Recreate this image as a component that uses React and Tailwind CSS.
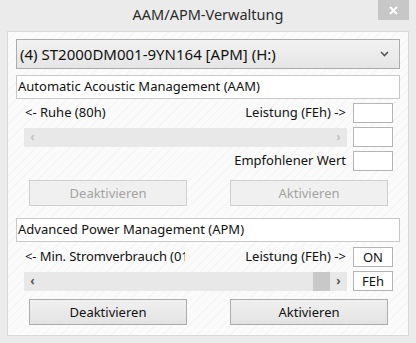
import React from 'react';

const font = { fontFamily: '"Noto Sans", "Open Sans", sans-serif' };

function EditBox({ value, w = 'w-[40px]' }) {
  return (
    <div className={`${w} h-[20px] border border-[#b4b4b4] bg-white flex items-center justify-center text-[13px] text-[#111] leading-none`}>
      {value}
    </div>
  );
}

function ScrollBar({ enabled, thumb }) {
  const arrow = enabled ? 'text-[#555]' : 'text-[#c4c4c4]';
  return (
    <div className="w-[323px] h-[19px] bg-[#e8e8e8] flex items-center">
      <span className={`w-[17px] text-center text-[12px] font-bold leading-none ${arrow}`}>‹</span>
      <div className="flex-1 flex justify-end h-full">
        {thumb && <div className="w-[17px] h-full bg-[#c8c8c8]" />}
      </div>
      <span className={`w-[17px] text-center text-[12px] font-bold leading-none ${arrow}`}>›</span>
    </div>
  );
}

function Btn({ label, disabled }) {
  return (
    <button
      className={`w-[158px] h-[26px] border text-[13px] leading-none ${
        disabled
          ? 'border-[#cfcfcf] bg-[#f0f0f0] text-[#a3a3a3]'
          : 'border-[#adadad] bg-gradient-to-b from-[#f0f0f0] to-[#e3e3e3] text-[#111]'
      }`}
    >
      {label}
    </button>
  );
}

function GroupLabel({ text, h }) {
  return (
    <div className={`${h} border border-[#c9c9c9] bg-white flex items-center pl-[1px] text-[13px] text-[#111]`}>
      {text}
    </div>
  );
}

export default function App() {
  return (
    <div className="w-[416px] h-[343px] bg-[#ebebeb] flex flex-col" style={font}>
      {/* Title bar */}
      <div className="h-[31px] grid grid-cols-[1fr_auto_1fr] items-start">
        <div />
        <div className="pt-[4px] text-[14.5px] text-[#2b2b2b]">AAM/APM-Verwaltung</div>
        <div className="flex justify-end pr-[7px]">
          <div className="w-[31px] h-[20px] bg-[#c7c7c7] flex items-center justify-center">
            <svg width="9" height="9" viewBox="0 0 9 9">
              <path d="M1 1L8 8M8 1L1 8" stroke="#fff" strokeWidth="1.8" />
            </svg>
          </div>
        </div>
      </div>

      {/* Client area */}
      <div className="mx-[7px] flex-1 mb-[7px] border border-[#d9d9d9] bg-[repeating-linear-gradient(135deg,#fbfbfb_0px,#fbfbfb_5px,#f5f5f5_5px,#f5f5f5_6px)] pl-[8px] pr-[8px] pt-[7px] flex flex-col text-[13px] text-[#111]">
        {/* Drive combo */}
        <div className="h-[30px] border border-[#acacac] bg-gradient-to-b from-[#f2f2f2] to-[#e5e5e5] flex items-center justify-between pl-[3px] pr-[10px]">
          <span className="text-[15px] text-[#111]">(4) ST2000DM001-9YN164 [APM] (H:)</span>
          <svg width="9" height="6" viewBox="0 0 9 6">
            <path d="M1 1L4.5 4.5L8 1" stroke="#555" strokeWidth="1.6" fill="none" />
          </svg>
        </div>

        {/* AAM */}
        <div className="mt-[6px]">
          <GroupLabel text="Automatic Acoustic Management (AAM)" h="h-[24px]" />
        </div>
        <div className="pl-[8px] pr-[7px] flex flex-col">
          <div className="mt-[4px] h-[20px] flex items-center">
            <span className="pl-[1px]">&lt;- Ruhe (80h)</span>
            <span className="ml-auto mr-[7px]">Leistung (FEh) -&gt;</span>
            <EditBox value="" />
          </div>
          <div className="mt-[4px] h-[20px] flex items-center justify-between">
            <ScrollBar enabled={false} />
            <EditBox value="" />
          </div>
          <div className="mt-[4px] h-[20px] flex items-center justify-end">
            <span className="mr-[7px]">Empfohlener Wert</span>
            <EditBox value="" />
          </div>
          <div className="mt-[9px] px-[5px] flex justify-between">
            <Btn label="Deaktivieren" disabled />
            <Btn label="Aktivieren" disabled />
          </div>
        </div>

        {/* APM */}
        <div className="mt-[12px]">
          <GroupLabel text="Advanced Power Management (APM)" h="h-[24px]" />
        </div>
        <div className="pl-[8px] pr-[7px] flex flex-col">
          <div className="mt-[5px] h-[20px] flex items-center">
            <span className="pl-[1px] w-[161px] overflow-hidden whitespace-nowrap tracking-[-0.1px]">&lt;- Min. Stromverbrauch (01h)</span>
            <span className="ml-auto mr-[7px]">Leistung (FEh) -&gt;</span>
            <EditBox value="ON" />
          </div>
          <div className="mt-[4px] h-[20px] flex items-center justify-between">
            <ScrollBar enabled thumb />
            <EditBox value="FEh" />
          </div>
          <div className="mt-[8px] px-[5px] flex justify-between">
            <Btn label="Deaktivieren" />
            <Btn label="Aktivieren" />
          </div>
        </div>
      </div>
    </div>
  );
}
